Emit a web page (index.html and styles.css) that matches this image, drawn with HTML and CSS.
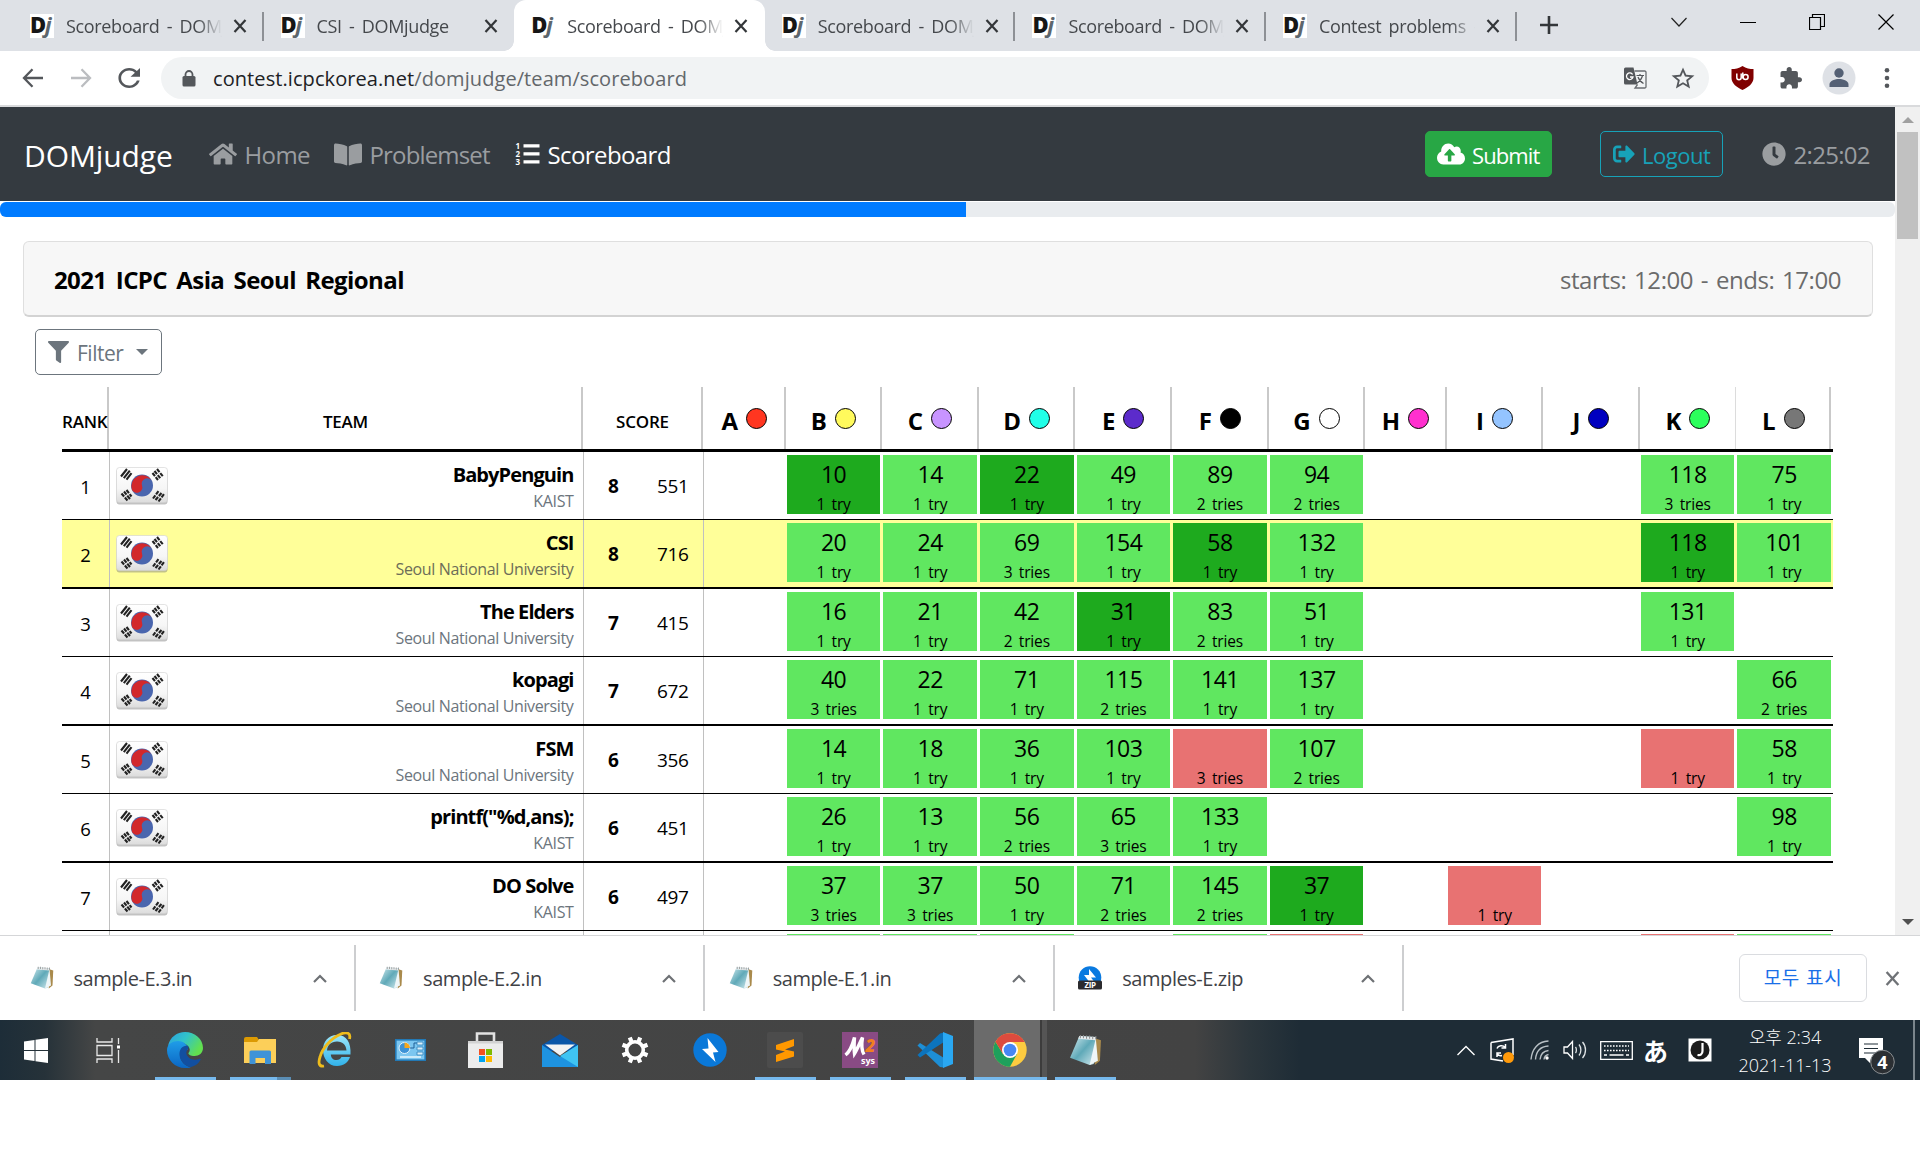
FILE: index.html
```html
<!DOCTYPE html>
<html lang="ko">
<head>
<meta charset="utf-8">
<title>Scoreboard - DOMjudge</title>
<link rel="stylesheet" href="styles.css">
</head>
<body>
<svg class="defs" width="0" height="0" aria-hidden="true">
  <defs>
    <linearGradient id="flagBg" x1="0" y1="0" x2="0" y2="1"><stop offset="0" stop-color="#fff"/><stop offset=".6" stop-color="#f6f6f6"/><stop offset="1" stop-color="#dcdcdc"/></linearGradient>
    <linearGradient id="edgeA" x1="0" y1="0" x2="1" y2=".5"><stop offset="0" stop-color="#2a9fe0"/><stop offset=".5" stop-color="#31c3c9"/><stop offset="1" stop-color="#62e04f"/></linearGradient>
    <linearGradient id="edgeB" x1="0" y1="0" x2="0" y2="1"><stop offset="0" stop-color="#1f9de8"/><stop offset="1" stop-color="#0b66c4"/></linearGradient>
    <linearGradient id="ieBlue" x1="0" y1="0" x2="0" y2="1"><stop offset="0" stop-color="#9be6fb"/><stop offset="1" stop-color="#31b2ea"/></linearGradient>
    <linearGradient id="page" x1="0" y1="0" x2="1" y2="1"><stop offset="0" stop-color="#d9eef2"/><stop offset=".5" stop-color="#5fa9b8"/><stop offset="1" stop-color="#d3e9ee"/></linearGradient>
    <symbol id="flag" viewBox="0 0 52 38">
      <rect x=".5" y="1.5" width="51" height="36" rx="3" fill="#777" opacity=".45"/>
      <rect x=".5" y=".5" width="51" height="35" rx="3" fill="url(#flagBg)" stroke="#d0d0d0" stroke-width=".6"/>
      <circle cx="26" cy="18.500" r="11" fill="#4a66ae"/>
      <path d="M16 23A11 11 0 0 1 36 14A5.500 5.500 0 0 0 26 18.500A5.500 5.500 0 0 1 16 23z" fill="#d2282c"/>
      <g stroke="#222" stroke-width="2.100">
        <path d="M5 9.500l6-7.500M7.800 11.200l6-7.500M10.500 12.600l5-6.500"/>
        <path d="M41 2l6 7.500M38.500 4l6 7.500M36.500 6l5.500 7" stroke-dasharray="4 1.200"/>
        <path d="M5.500 26.500l6 7M8 24.500l6 7.500M10.500 23l5 6.500" stroke-dasharray="4 1.200 6"/>
        <path d="M37 31.500l5.500-7.500M39.500 33l6-7M42.500 34.500l5.500-7.500" stroke-dasharray="4 1.200"/>
      </g>
    </symbol>
    <symbol id="close" viewBox="0 0 14 14"><path d="M1.500 1l11 12M12.500 1l-11 12" stroke="currentColor" stroke-width="2.200" fill="none"/></symbol>
    <symbol id="up" viewBox="0 0 14 9"><path d="M1 8l6-6 6 6" stroke="#6e7175" stroke-width="2.200" fill="none"/></symbol>
    <symbol id="note" viewBox="0 0 32 32">
      <path d="M25 4l6 2-1 20-5 4z" fill="#a98a4c"/>
      <path d="M10 2l16 1-2 26-4 1L1 23z" fill="url(#page)"/>
      <path d="M10 2l16 1-.2 3L9 4.500z" fill="#e8edef"/>
      <path d="M26 4l2 22-8 4z" fill="#eef6f8"/>
      <path d="M11 1v3M14 1v3M17 1.500v3M20 1.500v3M23 2v3M26 2v3" stroke="#8c8c8c" stroke-width="1"/>
    </symbol>
  </defs>
</svg>

<div class="tabs">
  <div class="tab"><span class="fav"><b>D</b><i>j</i></span><span class="tt">Scoreboard - DOMjudge</span><svg class="x"><use href="#close"/></svg></div>
  <div class="tab nosep"><span class="fav"><b>D</b><i>j</i></span><span class="tt">CSI - DOMjudge</span><svg class="x"><use href="#close"/></svg></div>
  <div class="tab active"><span class="fav"><b>D</b><i>j</i></span><span class="tt">Scoreboard - DOMjudge</span><svg class="x"><use href="#close"/></svg></div>
  <div class="tab"><span class="fav"><b>D</b><i>j</i></span><span class="tt">Scoreboard - DOMjudge</span><svg class="x"><use href="#close"/></svg></div>
  <div class="tab"><span class="fav"><b>D</b><i>j</i></span><span class="tt">Scoreboard - DOMjudge</span><svg class="x"><use href="#close"/></svg></div>
  <div class="tab"><span class="fav"><b>D</b><i>j</i></span><span class="tt">Contest problems - DOMjudge</span><svg class="x"><use href="#close"/></svg></div>
  <svg class="plus" width="20" height="20" viewBox="0 0 20 20"><path d="M10 1v18M1 10h18" stroke="#333639" stroke-width="2.600"/></svg>
  <div class="winctl">
    <svg width="16" height="16" viewBox="0 0 16 16"><path d="M.5 4L8 12l7.500-8" stroke="#222" stroke-width="1.200" fill="none"/></svg>
    <svg width="16" height="16" viewBox="0 0 16 16"><path d="M0 8.500h16" stroke="#000"/></svg>
    <svg width="16" height="16" viewBox="0 0 16 16"><path d="M.5 3.500h11v12H.5zM3.500 3V.5h12v12H12" stroke="#000" stroke-width="1.200" fill="none"/></svg>
    <svg width="16" height="16" viewBox="0 0 16 16"><path d="M.5.500l15 15M15.500.500l-15 15" stroke="#000" stroke-width="1.200"/></svg>
  </div>
</div>

<div class="toolbar">
  <svg class="back" width="22" height="20" viewBox="0 0 22 20"><path d="M21 10H2M10.500 1.200L2 10l8.500 8.800" fill="none" stroke="#54575b" stroke-width="2.300"/></svg>
  <svg class="fwd" width="22" height="20" viewBox="0 0 22 20"><path d="M1 10h19M11.500 1.200L20 10l-8.500 8.800" fill="none" stroke="#bbbdc0" stroke-width="2.300"/></svg>
  <svg class="reload" width="22" height="20" viewBox="3.700 4 16.300 16" preserveAspectRatio="none"><path fill="#54575b" d="M17.650 6.350C16.200 4.900 14.210 4 12 4c-4.420 0-7.990 3.580-7.990 8s3.570 8 7.990 8c3.730 0 6.840-2.550 7.730-6h-2.080c-.82 2.330-3.040 4-5.650 4-3.310 0-6-2.690-6-6s2.690-6 6-6c1.660 0 3.140.690 4.220 1.780L13 11h7V4l-2.350 2.350z"/></svg>
  <div class="omni">
    <svg width="14" height="17" viewBox="0 0 14 17"><path d="M3.500 7V4.500a3.500 3.500 0 0 1 7 0V7" fill="none" stroke="#54575b" stroke-width="1.800"/><rect x=".5" y="6" width="13" height="10.500" rx="1.500" fill="#54575b"/></svg>
    <span class="url">contest.icpckorea.net<em>/domjudge/team/scoreboard</em></span>
    <svg class="tr" width="23" height="22" viewBox="0 0 23 22"><path d="M1.500.500h8l4 17h-12A1.500 1.500 0 0 1 0 16V2A1.500 1.500 0 0 1 1.500.500z" fill="#54575b"/><path d="M10.500 4h10.300a1.200 1.200 0 0 1 1.200 1.200v14.600a1.200 1.200 0 0 1-1.200 1.200H11l2.500-3.500" fill="none" stroke="#6a6d71" stroke-width="1.300"/><path d="M8.600 7.500A3.300 3.300 0 1 0 9 10H6" stroke="#fff" stroke-width="1.300" fill="none"/><path d="M12.500 8.500h7.500M16 7v1.500M18.500 8.500c-.8 3.500-3 6-5.500 7.500M14 10c1 3 3 5 5.500 6.500" stroke="#54575b" stroke-width="1.200" fill="none"/></svg>
    <svg width="24" height="22" viewBox="1.500 1.500 21 20" preserveAspectRatio="none"><path fill="#54575b" d="M22 9.240l-7.190-.62L12 2 9.190 8.630 2 9.240l5.460 4.730L5.820 21 12 17.270 18.180 21l-1.630-7.030L22 9.240zM12 15.400l-3.760 2.270 1-4.280-3.320-2.880 4.380-.38L12 6.100l1.710 4.040 4.380.38-3.320 2.880 1 4.280L12 15.400z"/></svg>
  </div>
  <svg class="ub" width="23" height="24" viewBox="0 0 23 24"><path d="M11.500 0C8 2.500 4 3 .5 3v9c0 5.500 5.500 9.500 11 12 5.500-2.500 11-6.500 11-12V3C19 3 15 2.500 11.500 0z" fill="#800000"/><path d="M5.800 7.500v4a2.200 2.200 0 0 0 4.400 0v-4M11.800 6.500v6" stroke="#fff" stroke-width="1.500" fill="none"/><circle cx="14.600" cy="11" r="2.500" fill="none" stroke="#fff" stroke-width="1.500"/></svg>
  <svg class="ext" width="22" height="22" viewBox="1.500 1 21.500 21.500"><path fill="#54575b" d="M20.500 11H19V7c0-1.100-.9-2-2-2h-4V3.500C13 2.120 11.880 1 10.500 1S8 2.120 8 3.500V5H4c-1.100 0-1.990.9-1.990 2v3.800H3.500c1.490 0 2.700 1.210 2.700 2.700s-1.210 2.700-2.700 2.700H2V20c0 1.100.9 2 2 2h3.800v-1.500c0-1.490 1.210-2.700 2.700-2.700s2.700 1.210 2.700 2.700V22H17c1.100 0 2-.9 2-2v-4h1.500c1.380 0 2.500-1.120 2.500-2.500S21.880 11 20.500 11z"/></svg>
  <svg class="ava" width="34" height="34" viewBox="0 0 34 34"><circle cx="17" cy="17" r="16.500" fill="#dee1e6"/><circle cx="17" cy="12" r="4.700" fill="#546074"/><path d="M7.500 26v-2.500c0-4 6-5.500 9.500-5.500s9.500 1.500 9.500 5.500V26z" fill="#546074"/></svg>
  <svg class="dots" width="6" height="20" viewBox="0 0 6 20"><g fill="#54575b"><circle cx="3" cy="2.300" r="2.300"/><circle cx="3" cy="10" r="2.300"/><circle cx="3" cy="17.700" r="2.300"/></g></svg>
</div>

<div class="view">
  <div class="page">
    <div class="navbar">
      <span class="brand">DOMjudge</span>
      <span class="nl home"><svg width="28" height="24" viewBox="0 0 576 512" preserveAspectRatio="none"><path d="M280.370 148.260L96 300.110V464a16 16 0 0 0 16 16l112.060-.29a16 16 0 0 0 15.920-16V368a16 16 0 0 1 16-16h64a16 16 0 0 1 16 16v95.640a16 16 0 0 0 16 16.050L464 480a16 16 0 0 0 16-16V300L295.670 148.260a12.190 12.190 0 0 0-15.300 0zM571.600 251.470L488 182.560V44.050a12 12 0 0 0-12-12h-56a12 12 0 0 0-12 12v72.610L318.470 43a48 48 0 0 0-61 0L4.340 251.470a12 12 0 0 0-1.600 16.900l25.500 31A12 12 0 0 0 45.150 301l235.220-193.740a12.190 12.190 0 0 1 15.300 0L530.900 301a12 12 0 0 0 16.900-1.600l25.500-31a12 12 0 0 0-1.700-16.930z"/></svg><span>Home</span></span>
      <span class="nl probs"><svg width="28" height="25" viewBox="0 0 576 512" preserveAspectRatio="none"><path d="M542.220 32.050c-54.800 3.110-163.720 14.430-230.960 55.590-4.640 2.840-7.270 7.890-7.270 13.170v363.870c0 11.550 12.630 18.850 23.280 13.490 69.180-34.820 169.230-44.320 218.700-46.920 16.890-.89 30.020-14.430 30.020-30.660V62.750c.01-17.710-15.350-31.740-33.770-30.700zM264.730 87.640C197.500 46.480 88.580 35.170 33.780 32.050 15.360 31.010 0 45.040 0 62.750V400.600c0 16.240 13.130 29.780 30.020 30.660 49.490 2.600 149.590 12.110 218.770 46.950 10.620 5.350 23.210-1.940 23.210-13.460V100.630c0-5.290-2.620-10.140-7.270-12.990z"/></svg><span>Problemset</span></span>
      <span class="nl on"><svg width="25" height="24" viewBox="0 0 25 24"><path d="M8.500 2.300h16v3.200h-16zM8.500 10.300h16v3.200h-16zM8.500 18.300h16v3.200h-16z"/><text x=".5" y="7" class="li">1</text><text x=".5" y="15.200" class="li">2</text><text x=".5" y="23.300" class="li">3</text></svg><span>Scoreboard</span></span>
      <span class="btn submit"><svg width="28" height="24" viewBox="0 0 640 512" preserveAspectRatio="none"><path d="M537.600 226.600c4.100-10.700 6.400-22.400 6.400-34.600 0-53-43-96-96-96-19.700 0-38.100 6-53.300 16.200C367 64.200 315.300 32 256 32c-88.400 0-160 71.600-160 160 0 2.700.1 5.400.2 8.100C40.200 219.800 0 273.200 0 336c0 79.500 64.500 144 144 144h368c70.700 0 128-57.300 128-128 0-61.900-44-113.600-102.400-125.400zM393.400 288H328v112c0 8.800-7.200 16-16 16h-48c-8.800 0-16-7.200-16-16V288h-65.400c-14.300 0-21.400-17.200-11.300-27.300l105.400-105.400c6.200-6.200 16.400-6.200 22.600 0l105.400 105.400c10.100 10.100 2.900 27.300-11.300 27.300z"/></svg><span>Submit</span></span>
      <span class="btn logout"><svg width="22" height="20" viewBox="0 32 512 448" preserveAspectRatio="none"><path d="M497 273L329 441c-15 15-41 4.500-41-17v-96H152c-13.300 0-24-10.700-24-24v-96c0-13.300 10.700-24 24-24h136V88c0-21.400 25.900-32 41-17l168 168c9.300 9.400 9.300 24.600 0 34zM192 436v-40c0-6.600-5.400-12-12-12H96c-17.700 0-32-14.300-32-32V160c0-17.700 14.300-32 32-32h84c6.600 0 12-5.400 12-12V76c0-6.600-5.400-12-12-12H96c-53 0-96 43-96 96v192c0 53 43 96 96 96h84c6.600 0 12-5.400 12-12z"/></svg><span>Logout</span></span>
      <span class="nl clock"><svg width="24" height="24" viewBox="0 0 512 512"><path d="M256,8C119,8,8,119,8,256S119,504,256,504,504,393,504,256,393,8,256,8Zm92.490,313h0l-20,25a16,16,0,0,1-22.490,2.500h0l-67-49.720a40,40,0,0,1-15-31.230V112a16,16,0,0,1,16-16h32a16,16,0,0,1,16,16V256l58,42.500A16,16,0,0,1,348.490,321Z"/></svg><span>2:25:02</span></span>
    </div>
    <div class="progress"><div class="bar" style="width:50.98%"></div></div>
    <div class="card"><span class="ct">2021 ICPC Asia Seoul Regional</span><span class="cd">starts: 12:00 - ends: 17:00</span></div>
    <div class="filter"><svg width="21" height="22" viewBox="0 0 512 512" preserveAspectRatio="none"><path fill="#6c757d" d="M487.976 0H24.028C2.710 0-8.047 25.866 7.058 40.971L192 225.941V432c0 7.831 3.821 15.170 10.237 19.662l80 55.980C298.020 518.690 320 507.493 320 487.980V225.941l184.947-184.970C520.021 25.896 509.338 0 487.976 0z"/></svg><span class="ft">Filter</span><span class="caret"></span></div>

    <div class="board">
      <div class="row head">
        <div class="h">RANK</div><div class="h">TEAM</div><div class="h">SCORE</div>
        <div class="p">A<i style="background:#ff3620"></i></div>
        <div class="p">B<i style="background:#fffa5c"></i></div>
        <div class="p">C<i style="background:#c894ff"></i></div>
        <div class="p">D<i style="background:#20ffe8"></i></div>
        <div class="p">E<i style="background:#5c2bcb"></i></div>
        <div class="p">F<i style="background:#000"></i></div>
        <div class="p">G<i style="background:#fff"></i></div>
        <div class="p">H<i style="background:#ff30cf"></i></div>
        <div class="p">I<i style="background:#94c4ff"></i></div>
        <div class="p">J<i style="background:#0000c0"></i></div>
        <div class="p thin">K<i style="background:#2cff5c"></i></div>
        <div class="p last">L<i style="background:#777"></i></div>
      </div>
      <div class="row">
        <div class="rk">1</div><div class="tm"><svg><use href="#flag"/></svg><div><b>BabyPenguin</b><span>KAIST</span></div></div><div class="sc"><b>8</b><span>551</span></div>
        <div></div><div class="c ok first">10<s>1 try</s></div><div class="c ok">14<s>1 try</s></div><div class="c ok first">22<s>1 try</s></div><div class="c ok">49<s>1 try</s></div><div class="c ok">89<s>2 tries</s></div><div class="c ok">94<s>2 tries</s></div><div></div><div></div><div></div><div class="c ok">118<s>3 tries</s></div><div class="c ok">75<s>1 try</s></div>
      </div>
      <div class="row even me">
        <div class="rk">2</div><div class="tm"><svg><use href="#flag"/></svg><div><b>CSI</b><span>Seoul National University</span></div></div><div class="sc"><b>8</b><span>716</span></div>
        <div></div><div class="c ok">20<s>1 try</s></div><div class="c ok">24<s>1 try</s></div><div class="c ok">69<s>3 tries</s></div><div class="c ok">154<s>1 try</s></div><div class="c ok first">58<s>1 try</s></div><div class="c ok">132<s>1 try</s></div><div></div><div></div><div></div><div class="c ok first">118<s>1 try</s></div><div class="c ok">101<s>1 try</s></div>
      </div>
      <div class="row">
        <div class="rk">3</div><div class="tm"><svg><use href="#flag"/></svg><div><b>The Elders</b><span>Seoul National University</span></div></div><div class="sc"><b>7</b><span>415</span></div>
        <div></div><div class="c ok">16<s>1 try</s></div><div class="c ok">21<s>1 try</s></div><div class="c ok">42<s>2 tries</s></div><div class="c ok first">31<s>1 try</s></div><div class="c ok">83<s>2 tries</s></div><div class="c ok">51<s>1 try</s></div><div></div><div></div><div></div><div class="c ok">131<s>1 try</s></div><div></div>
      </div>
      <div class="row even">
        <div class="rk">4</div><div class="tm"><svg><use href="#flag"/></svg><div><b>kopagi</b><span>Seoul National University</span></div></div><div class="sc"><b>7</b><span>672</span></div>
        <div></div><div class="c ok">40<s>3 tries</s></div><div class="c ok">22<s>1 try</s></div><div class="c ok">71<s>1 try</s></div><div class="c ok">115<s>2 tries</s></div><div class="c ok">141<s>1 try</s></div><div class="c ok">137<s>1 try</s></div><div></div><div></div><div></div><div></div><div class="c ok">66<s>2 tries</s></div>
      </div>
      <div class="row">
        <div class="rk">5</div><div class="tm"><svg><use href="#flag"/></svg><div><b>FSM</b><span>Seoul National University</span></div></div><div class="sc"><b>6</b><span>356</span></div>
        <div></div><div class="c ok">14<s>1 try</s></div><div class="c ok">18<s>1 try</s></div><div class="c ok">36<s>1 try</s></div><div class="c ok">103<s>1 try</s></div><div class="c bad">&nbsp;<s>3 tries</s></div><div class="c ok">107<s>2 tries</s></div><div></div><div></div><div></div><div class="c bad">&nbsp;<s>1 try</s></div><div class="c ok">58<s>1 try</s></div>
      </div>
      <div class="row even">
        <div class="rk">6</div><div class="tm"><svg><use href="#flag"/></svg><div><b>printf("%d,ans);</b><span>KAIST</span></div></div><div class="sc"><b>6</b><span>451</span></div>
        <div></div><div class="c ok">26<s>1 try</s></div><div class="c ok">13<s>1 try</s></div><div class="c ok">56<s>2 tries</s></div><div class="c ok">65<s>3 tries</s></div><div class="c ok">133<s>1 try</s></div><div></div><div></div><div></div><div></div><div></div><div class="c ok">98<s>1 try</s></div>
      </div>
      <div class="row">
        <div class="rk">7</div><div class="tm"><svg><use href="#flag"/></svg><div><b>DO Solve</b><span>KAIST</span></div></div><div class="sc"><b>6</b><span>497</span></div>
        <div></div><div class="c ok">37<s>3 tries</s></div><div class="c ok">37<s>3 tries</s></div><div class="c ok">50<s>1 try</s></div><div class="c ok">71<s>2 tries</s></div><div class="c ok">145<s>2 tries</s></div><div class="c ok first">37<s>1 try</s></div><div></div><div class="c bad">&nbsp;<s>1 try</s></div><div></div><div></div><div></div>
      </div>
      <div class="row even">
        <div class="rk"></div><div class="tm"></div><div class="sc"></div>
        <div></div><div class="c ok"></div><div class="c ok"></div><div class="c ok"></div><div></div><div class="c ok"></div><div class="c bad"></div><div></div><div></div><div></div><div class="c bad"></div><div class="c ok"></div>
      </div>
    </div>
  </div>
  <div class="scroll"><span class="au"></span><span class="thumb"></span><span class="ad"></span></div>
</div>

<div class="shelf">
  <div class="dl"><svg class="ni"><use href="#note"/></svg><span>sample-E.3.in</span><svg class="up"><use href="#up"/></svg></div>
  <div class="dl"><svg class="ni"><use href="#note"/></svg><span>sample-E.2.in</span><svg class="up"><use href="#up"/></svg></div>
  <div class="dl"><svg class="ni"><use href="#note"/></svg><span>sample-E.1.in</span><svg class="up"><use href="#up"/></svg></div>
  <div class="dl"><svg class="ni zip" viewBox="0 0 24 24"><circle cx="12" cy="11.500" r="11.300" fill="#0a7ae0"/><path d="M11 3l7 8.500h-5l3 4H11L6 9h5z" fill="#fff"/><rect y="14.500" width="24" height="9" rx="1.500" fill="#2b2b2e"/><text x="12" y="22.300" text-anchor="middle" class="zt">ZIP</text></svg><span>samples-E.zip</span><svg class="up"><use href="#up"/></svg></div>
  <div class="showall">모두 표시</div>
  <svg class="sx"><use href="#close"/></svg>
</div>

<div class="taskbar">
  <div class="slot s0"><svg width="24" height="25" viewBox="0 0 24 25"><path d="M0 3.500L10.500 2v10H0zM11.500 1.800L24 0v12H11.500zM0 13h10.500v10L0 21.500zM11.500 13H24v12l-12.500-1.800z" fill="#fff"/></svg></div>
  <div class="slot s1"><svg width="24" height="25" viewBox="0 0 24 25"><path d="M1 0v4h15V0M1 7.500h15v10H1zM1 25v-4h15v4M22.500 0v6M22.500 12v13" fill="none" stroke="#e8e8e8" stroke-width="1.300"/><rect x="21" y="7.500" width="3" height="3" fill="#fff"/></svg></div>
  <div class="slot run"><svg width="36" height="36" viewBox="0 0 36 36"><path d="M1 14C3 5 10 0 18 0c10 0 18 7 18 16 0 5-4 8-8.500 8-4 0-6.500-1.500-6-3 2-2 1.500-5-.5-7-5-5-14-5-20 0z" fill="url(#edgeA)"/><path d="M0 18C0 12 6 9 11 9c6 0 10 4 10 9-4-3-8 0-8 5 0 6 5 11 11 12.500-2 .4-4 .5-6 .5C8 36 0 28 0 18z" fill="url(#edgeB)"/><path d="M21 14c-5-1-9 3-8.500 9 .5 7 7 12 11.500 12 4-1 7-3 9.500-7 .5-1-.5-1.500-1.500-1-3 1.500-9 1-11.500-3-2-3-1-5 .5-7 .6-1 .6-2 0-3z" fill="#124fa0"/></svg></div>
  <div class="slot run multi"><svg width="32" height="27" viewBox="0 0 32 27"><path d="M0 2a2 2 0 0 1 2-2h11l2 3-2 3H0z" fill="#dc9a02"/><path d="M0 5h13l2-3h17v24H0z" fill="#fccf59"/><path d="M5.500 27V15a1.500 1.500 0 0 1 1.500-1.500h18.500A1.500 1.500 0 0 1 27 15v12h-6v-6H11.500v6z" fill="#3f93d7"/></svg></div>
  <div class="slot"><svg width="36" height="36" viewBox="0 0 36 36"><path d="M10 18.500C10.500 13 14 9.500 20 9.500s9 3.500 9.500 9zM33.500 22.500c.8-12-4-19.500-13.500-19.500C11 3 6 10 6 18s5 16 14 16c7 0 11-3.500 13-9h-8.500c-1 2-2.500 3-5 3-3.500 0-5.500-2-5.700-5.500z" fill="url(#ieBlue)" fill-rule="evenodd"/><path d="M14.500 16h10c-.3-3-2-4.700-5-4.700s-4.600 1.700-5 4.700z" fill="#434343"/><path d="M7 34c-5 1-6-3-4-9C5 17 14 6 24 2c6-2.500 10-1 8.500 5" fill="none" stroke="#eebc1c" stroke-width="2.800"/></svg></div>
  <div class="slot"><svg width="31" height="22" viewBox="0 0 31 22"><rect x=".8" y=".8" width="29.400" height="20.400" fill="#7cc6f0" stroke="#2379b5" stroke-width="1.600"/><circle cx="9.500" cy="9" r="5.500" fill="#3c92d6" stroke="#e4f4fc"/><path d="M9.500 9V3.500A5.500 5.500 0 0 1 15 9z" fill="#f4a61d"/><path d="M15 9h4V4h3" stroke="#205f96" fill="none"/><path d="M22 3h6v3h-6zM22 8h6v3h-6zM22 13h6v3h-6z" fill="#d9effb" stroke="#2e80b9" stroke-width=".8"/><path d="M5 18h21" stroke="#e7f6fd" stroke-width="1.500"/></svg></div>
  <div class="slot"><svg width="35" height="36" viewBox="0 0 35 36"><path d="M9 10V1.500h17V10" fill="none" stroke="#e2e2e2" stroke-width="2.600"/><path d="M0 9h35v27H0z" fill="#ececec"/><path d="M0 9h35v2.500H0z" fill="#d2d2d2"/><path d="M11 17h6v6h-6z" fill="#f25022"/><path d="M18 17h6v6h-6z" fill="#7fba00"/><path d="M11 24h6v6h-6z" fill="#00a4ef"/><path d="M18 24h6v6h-6z" fill="#ffb900"/></svg></div>
  <div class="slot"><svg width="36" height="33" viewBox="0 0 36 33"><path d="M0 11L18 0l18 11v6H0z" fill="#0a56a8"/><path d="M0 11l18 12L36 11v22H0z" fill="#1e93e0"/><path d="M36 11v22L18 22z" fill="#3fc4f3"/><path d="M3 10.500h30l-15 11z" fill="#f3f3f3"/></svg></div>
  <div class="slot"><svg width="28" height="28" viewBox="-14 -14 28 28"><circle r="8.300" fill="none" stroke="#fff" stroke-width="3.600"/><g stroke="#fff" stroke-width="4.200"><path d="M-5.200-12.500l2 5M5.200-12.500l-2 5M-5.200 12.500l2-5M5.200 12.500l-2-5M-12.500-5.200l5 2M-12.500 5.200l5-2M12.500-5.200l-5 2M12.500 5.200l-5-2"/></g></svg></div>
  <div class="slot"><svg width="34" height="34" viewBox="0 0 34 34"><circle cx="17" cy="17" r="16.700" fill="#0a78d8"/><path d="M14.500 5l11 14-5.500.500 2.500 9.500L9 16l6.500-.5z" fill="#fff"/></svg></div>
  <div class="slot run"><svg width="36" height="36" viewBox="0 0 36 36"><rect width="36" height="36" rx="2" fill="#4c4c4c"/><path d="M9 13L27 7v7l-9 3.500 9 2v5L9 30v-7l9-3.500-9-2z" fill="#ff9800"/></svg></div>
  <div class="slot run"><svg width="36" height="36" viewBox="0 0 36 36"><path d="M0 0h36v36H0z" fill="#894b84"/><path d="M3.500 23c4-3 7-10 9-17.500-.5 7-.5 12 0 16 2.500-4 5-10 8-16-1 6-1.500 12 1.500 17" fill="none" stroke="#fff" stroke-width="3.400"/><text x="23.500" y="20" class="m2">2</text><text x="19" y="32" class="sys">sys</text></svg></div>
  <div class="slot run"><svg width="36" height="36" viewBox="0 0 36 36"><path d="M3 11l-2.500 2.500L23 35l4 .500V26z" fill="#1d8fd6"/><path d="M3 25.500L.5 23 23 1.500l4-1V10z" fill="#0c74bd"/><path d="M26 0l10 4v28l-10 4z" fill="#2aa8f2"/></svg></div>
  <div class="slot run cur"><svg width="34" height="34" viewBox="0 0 34 34"><circle cx="17" cy="17" r="16.700" fill="#fccb40"/><path d="M2.500 8.700A16.700 16.700 0 0 0 17 33.700L24 21 10 21z" fill="#1fa05c"/><path d="M2.500 8.700A16.700 16.700 0 0 1 31.600 9L17 9 10 21z" fill="#dd4b3e"/><circle cx="17" cy="17" r="8" fill="#fff"/><circle cx="17" cy="17" r="6.300" fill="#4687f4"/></svg></div>
  <div class="slot run"><svg width="33" height="33"><use href="#note"/></svg></div>
  <div class="tray">
    <svg width="18" height="11" viewBox="0 0 18 11"><path d="M.5 10L9 1.500l8.500 8.500" fill="none" stroke="#fff" stroke-width="1.400"/></svg>
    <svg class="t2" width="25" height="25" viewBox="0 0 25 25"><path d="M1 4.500L23 1v16M1 4.500V21l12 2" fill="none" stroke="#fff" stroke-width="1.500"/><path d="M7 10.500c1-3 6-4 8-1M15.500 6v4h-4M7 19v-4h4M7 15c1 2 3 3 5 2.500" fill="none" stroke="#fff" stroke-width="1.500"/><circle cx="18.500" cy="19.500" r="5.500" fill="#ff9a0a"/></svg>
    <svg class="t3" width="19" height="20" viewBox="0 0 19 20"><path d="M1 19.500C2 9 8 1.500 18.500 1M5.500 19.500C6 12 10 6.500 18.500 6M10 19.500c.5-5 3-8.500 8.500-9M14 19.500c.3-2.500 1.500-4.500 4.500-5" fill="none" stroke="#b8c0c5" stroke-width="1.400"/><circle cx="17" cy="18" r="1.700" fill="#fff"/></svg>
    <svg class="t4" width="24" height="20" viewBox="0 0 24 20"><path d="M1 7h3.500L9.500 1.500v17L4.500 13H1z" fill="none" stroke="#fff" stroke-width="1.300"/><path d="M12.500 7c1.200 1.500 1.200 4.500 0 6M16 4.500c2.500 3 2.500 8 0 11M19.500 2c4 4.500 4 11.500 0 16" fill="none" stroke="#dfe3e5" stroke-width="1.300"/></svg>
    <svg class="t5" width="33" height="19" viewBox="0 0 33 19"><path d="M.7.700h31.600v17.600H.7z" fill="none" stroke="#fff" stroke-width="1.300"/><path d="M4 5h25M4 9.500h25" stroke="#fff" stroke-width="1.600" stroke-dasharray="1.600 1.400"/><path d="M4 14h3M9.500 14h14M26 14h3" stroke="#fff" stroke-width="1.500"/></svg>
    <span class="ime">あ</span>
    <svg class="t7" width="24" height="24" viewBox="0 0 24 24"><path d="M.5.500h23v23H.5z" fill="#fff"/><circle cx="12" cy="12" r="9.500" fill="#1c1c1c"/><path d="M14.500 5v8c0 3-2 4.500-5 4" fill="none" stroke="#fff" stroke-width="2.200"/></svg>
    <div class="time"><span>오후 2:34</span><span class="date">2021-11-13</span></div>
    <svg class="t9" width="37" height="37" viewBox="0 0 37 37"><path d="M0 0h24v20H12l-1 5-5-5H0z" fill="#fff"/><path d="M5 6h14M5 10.500h14M5 15h14" stroke="#1f2c36" stroke-width="1.200"/><circle cx="23.500" cy="24" r="11.800" fill="#2b2f33" stroke="#8b8f92" stroke-width="1"/><text x="23.500" y="30.500" text-anchor="middle" class="badge">4</text></svg>
    <span class="desk"></span>
  </div>
</div>
</body>
</html>
```
FILE: styles.css
```css
* { box-sizing: border-box; }
body { margin: 0; width: 1920px; height: 1175px; overflow: hidden; background: #fff; color: #000; font-family: "Open Sans", "Noto Sans CJK KR", sans-serif; }
svg { display: block; flex: none; }
.defs { position: absolute; }

/* tab strip */
.tabs { display: flex; height: 51px; background: #dee1e6; padding-left: 13px; }
.tab { position: relative; width: 250.600px; height: 51px; padding: 0 16.500px 0 17px; display: flex; align-items: center; color: #45484c; flex: none; }
.tab::after { content: ""; position: absolute; right: 0; top: 12px; width: 2px; height: 29px; background: #8d9095; }
.tab.nosep::after { display: none; }
.tab.active { background: #fff; border-radius: 12px 12px 0 0; }
.tab.active::before, .tab.active::after { content: ""; position: absolute; bottom: 0; top: auto; width: 10px; height: 10px; background: radial-gradient(circle at 0 0, transparent 9.500px, #fff 10px); }
.tab.active::before { left: -10px; }
.tab.active::after { right: -10px; background: radial-gradient(circle at 100% 0, transparent 9.500px, #fff 10px); }
.fav { width: 24px; height: 24px; background: #fff; margin-right: 12px; display: flex; font-size: 22px; line-height: 21px; letter-spacing: -1px; flex: none; }
.fav b { color: #161616; font-weight: 800; width: 15px; }
.fav i { color: #5d666d; font-weight: 700; }
.tt { width: 156px; font-size: 18px; letter-spacing: -.35px; word-spacing: 3px; white-space: nowrap; overflow: hidden; line-height: 30px; -webkit-mask-image: linear-gradient(90deg, #000 132px, transparent 156px); mask-image: linear-gradient(90deg, #000 132px, transparent 156px); }
.x { width: 14px; height: 14px; margin-left: auto; color: #333639; }
.plus { margin: 15px 0 0 22px; }
.winctl { display: flex; gap: 53px; margin: 14px 26.500px 0 auto; }

/* address bar */
.toolbar { display: flex; height: 56px; background: #fff; border-bottom: 2px solid #d9dadc; align-items: center; padding-left: 22px; }
.fwd { margin-left: 26px; }
.reload { margin-left: 26px; }
.omni { display: flex; align-items: center; width: 1548px; height: 42px; border-radius: 21px; background: #f1f3f4; margin-left: 21px; padding: 0 14.500px 0 21px; }
.url { font-size: 20px; margin-left: 17px; line-height: 30px; color: #202124; letter-spacing: .08px; padding-top: 2px; }
.url em { font-style: normal; color: #63676b; }
.tr { margin: 0 24px 0 auto; }
.ub { margin-left: 22px; }
.ext { margin-left: 26px; }
.ava { margin-left: 20px; }
.dots { margin-left: 28px; }

/* page viewport */
.view { display: flex; height: 829px; border-bottom: 1px solid #d5d6d8; overflow: hidden; }
.page { width: 1895px; height: 828px; overflow: hidden; }
.scroll { width: 25px; background: #f0f0f0; display: flex; flex-direction: column; align-items: center; padding: 10px 0; }
.au, .ad { width: 0; height: 0; border: 6px solid transparent; border-top: 0; border-bottom: 6px solid #a0a0a0; }
.ad { border-bottom: 0; border-top: 6px solid #505050; margin-top: auto; }
.thumb { width: 21px; height: 107px; margin-top: 9px; background: #c1c1c1; }

.navbar { display: flex; align-items: center; height: 94px; background: #343a40; padding: 0 25px 0 24px; color: #fff; }
.brand { font-size: 30px; line-height: 40px; width: 185px; letter-spacing: -.1px; padding-top: 3px; }
.nl { display: flex; align-items: center; font-size: 24px; line-height: 36px; color: #9a9da0; fill: #9a9da0; letter-spacing: -.6px; }
.nl svg { margin-right: 7.500px; }
.nl span { padding-top: 2px; }
.home { width: 125px; }
.probs { width: 181px; }
.probs span { letter-spacing: -.85px; }
.nl.on { color: #fff; fill: #fff; }
.li { font: bold 8px "Open Sans", sans-serif; }
.btn { display: flex; align-items: center; height: 46px; border-radius: 5px; border: 1.500px solid; font-size: 22px; padding: 0 12px; letter-spacing: -.5px; }
.btn svg { margin-right: 7px; }
.btn span { padding-top: 1px; }
.submit { width: 127px; margin-left: auto; background: #28a745; border-color: #28a745; fill: #fff; padding-left: 11px; letter-spacing: -.9px; }
.logout { width: 123px; margin-left: 48px; color: #17a2b8; fill: #17a2b8; border-color: #17a2b8; }
.clock { margin-left: 39px; width: 108px; }
.clock span { letter-spacing: -.7px; }

.progress { margin-top: 1px; height: 15px; border-radius: 6px; background: #e9ecef; overflow: hidden; }
.bar { height: 15px; background: #007bff; }

.card { margin: 24px 22px 0 23px; height: 76px; border: 1px solid #dfdfdf; border-bottom: 2px solid #d3d3d3; border-radius: 6px; background: #f7f7f7; display: flex; justify-content: space-between; align-items: center; padding: 1px 31px 0 30px; }
.ct { font-size: 24px; font-weight: 700; letter-spacing: -.6px; word-spacing: 3.700px; }
.cd { font-size: 24px; color: #6b6b6b; letter-spacing: -.45px; word-spacing: 2px; }
.filter { display: flex; align-items: center; width: 127px; height: 46px; margin: 12px 0 0 35px; border: 1.500px solid #6c757d; border-radius: 5px; padding-left: 12px; color: #6c757d; }
.ft { font-size: 21px; margin-left: 8px; width: 59px; padding-top: 2px; letter-spacing: -.5px; }
.caret { border: 6px solid transparent; border-bottom: 0; border-top-color: #6c757d; }

/* scoreboard grid */
.board { width: 1771px; margin: 12px 0 0 62px; }
.row { display: grid; grid-template-columns: 48px 474px 120px 81.600px repeat(6, 96.600px) 81.600px repeat(4, 96.500px); height: 68px; border-bottom: 1px solid #000; }
.row.even { height: 69px; border-bottom-width: 2px; }
.row.head { height: 65px; border-bottom: 3px solid #000; }
.row.me { background: #ffff99; }
.h, .p { display: flex; align-items: center; justify-content: center; border-right: 2px solid #c9c9c9; margin-right: 1px; }
.p { margin-right: 0; }
.p.thin { border-right: 1px solid #dcdcdc; }
.p.last { margin-right: 1.500px; }
.h { font-size: 17px; font-weight: 600; padding-top: 7px; letter-spacing: -.2px; }
.h:first-child { justify-content: flex-start; white-space: nowrap; }
.p { font-size: 24px; font-weight: 700; padding: 4px 0 0 1px; }
.p i { width: 21px; height: 21px; border: 1.500px solid #000; border-radius: 50%; margin: -4px 0 0 8px; }
.rk { display: flex; align-items: center; justify-content: center; font-size: 18.500px; border-right: 1px solid #c0c0c0; padding: 1px 0 0; }
.tm { display: flex; border-right: 1px solid #c0c0c0; padding: 0 9.500px 0 6px; text-align: right; justify-content: space-between; }
.tm svg { width: 52px; height: 38px; margin-top: 15px; }
.tm b, .tm span { display: block; white-space: nowrap; }
.tm b { font-size: 20px; line-height: 28px; margin-top: 9px; letter-spacing: -.9px; }
.tm span { font-size: 16px; line-height: 22px; margin-top: 1px; color: #6c757d; letter-spacing: -.36px; }
.me .tm span { color: #6d6d58; }
.sc { display: flex; align-items: center; border-right: 1px solid #c0c0c0; font-size: 19px; padding: 1px 0 0 24px; }
.sc b { width: 49px; }
.sc span { letter-spacing: -.4px; }
.c { margin: 3px 1.800px 0 1.200px; height: 59px; text-align: center; font-size: 23px; line-height: 30px; padding-top: 4px; letter-spacing: -.5px; }
.c s { display: block; text-decoration: none; font-size: 15.500px; line-height: 22px; margin-top: 4px; letter-spacing: -.15px; word-spacing: 2.500px; }
.ok { background: #60e760; }
.first { background: #1eaa1e; }
.bad { background: #e87272; }

/* download shelf */
.shelf { display: flex; height: 84px; background: #fff; align-items: center; padding-left: 6px; }
.dl { position: relative; display: flex; align-items: center; width: 349.600px; height: 66px; border-right: 2px solid #cdced0; padding: 0 27px 0 23.500px; font-size: 20px; color: #3f4246; letter-spacing: -.45px; }
.ni { width: 24px; height: 24px; margin-right: 20px; }
.up { width: 14px; height: 9px; margin-left: auto; }
.zt { font: bold 8px "Open Sans", sans-serif; fill: #fff; }
.showall { width: 128px; height: 48px; border: 1.500px solid #dadce0; border-radius: 6px; margin-left: auto; display: flex; align-items: center; justify-content: center; padding-bottom: 4px; font-size: 19px; letter-spacing: .7px; color: #1a6fe8; font-family: "Noto Sans CJK KR", sans-serif; }
.sx { width: 15px; height: 15px; margin: 0 20px 0 18px; color: #6f7276; }

/* taskbar */
.taskbar { display: flex; height: 60px; background: linear-gradient(90deg, #1d2d38 0, #263239 45px, #454646 95px, #434343 1195px, #2c363c 1250px, #1e2c36 1300px, #1e2c36 100%); }
.slot { position: relative; width: 75px; height: 60px; display: flex; align-items: center; justify-content: center; flex: none; }
.s0 { width: 72px; }
.s1 { width: 75.500px; padding-right: 4px; }
.run::after { content: ""; position: absolute; left: 7px; bottom: 0; width: 61px; height: 3px; background: #76b9ed; }
.multi::after { background: linear-gradient(90deg, #76b9ed 47px, #5a8db4 47px); }
.cur { background: linear-gradient(90deg, transparent 1px, #6b6b6b 1px, #6b6b6b 67px, #3c3c3c 67px, #3c3c3c 69px, #555 69px, #555 74px, transparent 74px); }
.cur::after { left: 1px; width: 73px; }
.m2 { font: italic 800 17px "Open Sans", sans-serif; fill: #f07f20; }
.sys { font: bold 9px "Open Sans", sans-serif; fill: #fff; }
.tray { display: flex; align-items: center; margin-left: auto; color: #fff; height: 60px; }
.t2 { margin-left: 15px; }
.t3 { margin-left: 15px; }
.t4 { margin-left: 14px; }
.t5 { margin-left: 13px; }
.ime { font: bold 25px/40px "Noto Sans CJK JP", sans-serif; margin-left: 10px; width: 25px; }
.t7 { margin-left: 20px; }
.time { width: 96px; margin-left: 25px; display: flex; flex-direction: column; align-items: center; font-size: 18px; line-height: 28px; letter-spacing: -.1px; white-space: nowrap; font-weight: 300; padding-top: 1px; }
.t9 { margin: 12px 17px 0 26px; }
.badge { font: bold 18px "Open Sans", sans-serif; fill: #fff; }
.desk { width: 7px; height: 60px; border-left: 2px solid #7b858c; }
```
